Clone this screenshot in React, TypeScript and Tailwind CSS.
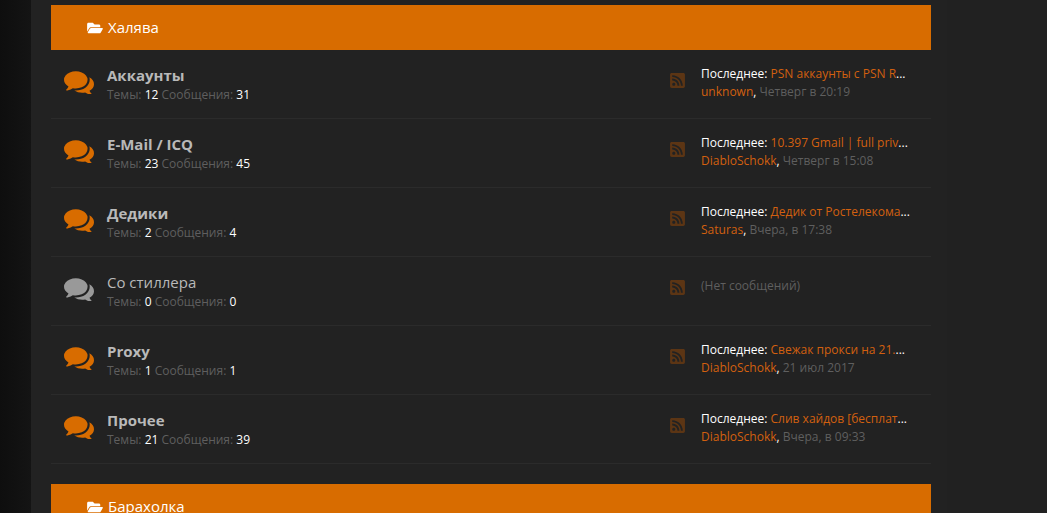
import { FaFolderOpen, FaRssSquare } from 'react-icons/fa';

const forums = [
  { title: 'Аккаунты', topics: '12', posts: '31', last: 'PSN аккаунты с PSN R', author: 'unknown', date: 'Четверг в 20:19' },
  { title: 'E-Mail / ICQ', topics: '23', posts: '45', last: '10.397 Gmail | full priv', author: 'DiabloSchokk', date: 'Четверг в 15:08' },
  { title: 'Дедики', topics: '2', posts: '4', last: 'Дедик от Ростелекома', author: 'Saturas', date: 'Вчера, в 17:38' },
  { title: 'Со стиллера', topics: '0', posts: '0', empty: true },
  { title: 'Proxy', topics: '1', posts: '1', last: 'Свежак прокси на 21.', author: 'DiabloSchokk', date: '21 июл 2017' },
  { title: 'Прочее', topics: '21', posts: '39', last: 'Слив хайдов [бесплат', author: 'DiabloSchokk', date: 'Вчера, в 09:33' },
];

function CommentsIcon({ className }: { className: string }) {
  return (
    <svg viewBox="0 192 1792 1408" className={className} fill="currentColor">
      <path d="M1408 768q0 139-94 257t-256.500 186.500-353.500 68.500q-86 0-176-16-124 88-278 128-36 9-86 16h-3q-11 0-20.500-8t-11.500-21q-1-3-1-6.500t.5-6.500 2-6l2.500-5 3.500-5.500 4-5 4.500-5 4-4.500q5-6 23-25t26-29.500 22.500-29 25-38.500 20.500-44q-124-72-195-177t-71-224q0-139 94-257t256.500-186.500 353.500-68.500 353.500 68.500 256.500 186.500 94 257zm384 256q0 120-71 224.500t-195 176.500q10 24 20.500 44t25 38.500 22.500 29 26 29.500 23 25q1 1 4 4.500t4.500 5 4 5 3.500 5.500l2.500 5 2 6 .5 6.500-1 6.500q-3 14-13 22t-22 7q-50-7-86-16-154-40-278-128-90 16-176 16-271 0-472-132 58 4 88 4 161 0 309-45t264-129q125-92 192-212t67-254q0-77-23-152 129 71 204 178t75 230z" />
    </svg>
  );
}

function ForumRow({ forum }: { forum: (typeof forums)[number] }) {
  return (
    <div className="flex h-[69px] items-start border-b border-[#2b2b2b]">
      <CommentsIcon className={`ml-[13px] mt-[20px] h-[24px] w-[30px] ${forum.empty ? 'text-[#999999]' : 'text-[#d86c00]'}`} />
      <div className="ml-[13px] flex-1 pt-[15px]">
        <div className={`text-[15px] leading-[21px] text-[#b9b9b9] ${forum.empty ? 'font-normal' : 'font-bold'}`}>{forum.title}</div>
        <div className="mt-[1px] text-[12px] leading-[16px] text-[#5f5f5f]">
          Темы: <span className="text-white">{forum.topics}</span> Сообщения: <span className="text-white">{forum.posts}</span>
        </div>
      </div>
      <FaRssSquare className="mt-[22px] h-[17px] w-[15px] text-[#5c3514]" />
      {forum.empty ? (
        <div className="ml-[16px] w-[230px] pt-[20px] text-[12px] leading-[18px] text-[#5f5f5f]">(Нет сообщений)</div>
      ) : (
        <div className="ml-[16px] w-[230px] pt-[15px] text-[12px] leading-[17px]">
          <div className="whitespace-nowrap text-white">
            Последнее: <span className="text-[#d2600f]">{forum.last}</span>...
          </div>
          <div className="mt-[1px] whitespace-nowrap text-[#5f5f5f]">
            <span className="text-[#d2600f]">{forum.author}</span><span className="text-white">,</span> {forum.date}
          </div>
        </div>
      )}
    </div>
  );
}

function CategoryBar({ title }: { title: string }) {
  return (
    <div className="flex h-[45px] items-center gap-[5px] bg-[#d86c00] pl-[36px] text-[15px] text-white">
      <FaFolderOpen className="h-[14px] w-[16px]" />
      <span>{title}</span>
    </div>
  );
}

export default function App() {
  return (
    <div className="h-[513px] overflow-hidden bg-[#222222] font-['Open_Sans',sans-serif]">
      <div className="flex h-full">
        <div className="w-[31px] bg-gradient-to-r from-[#0e0e0e] to-[#141414]" />
        <div className="w-[916px] bg-[#222222] pl-[20px] pr-[16px] pt-[5px]">
          <CategoryBar title="Халява" />
          {forums.map(f => (
            <ForumRow key={f.title} forum={f} />
          ))}
          <div className="mt-[20px]">
            <CategoryBar title="Барахолка" />
          </div>
        </div>
        <div className="flex-1 bg-[#212121]" />
      </div>
    </div>
  );
}
